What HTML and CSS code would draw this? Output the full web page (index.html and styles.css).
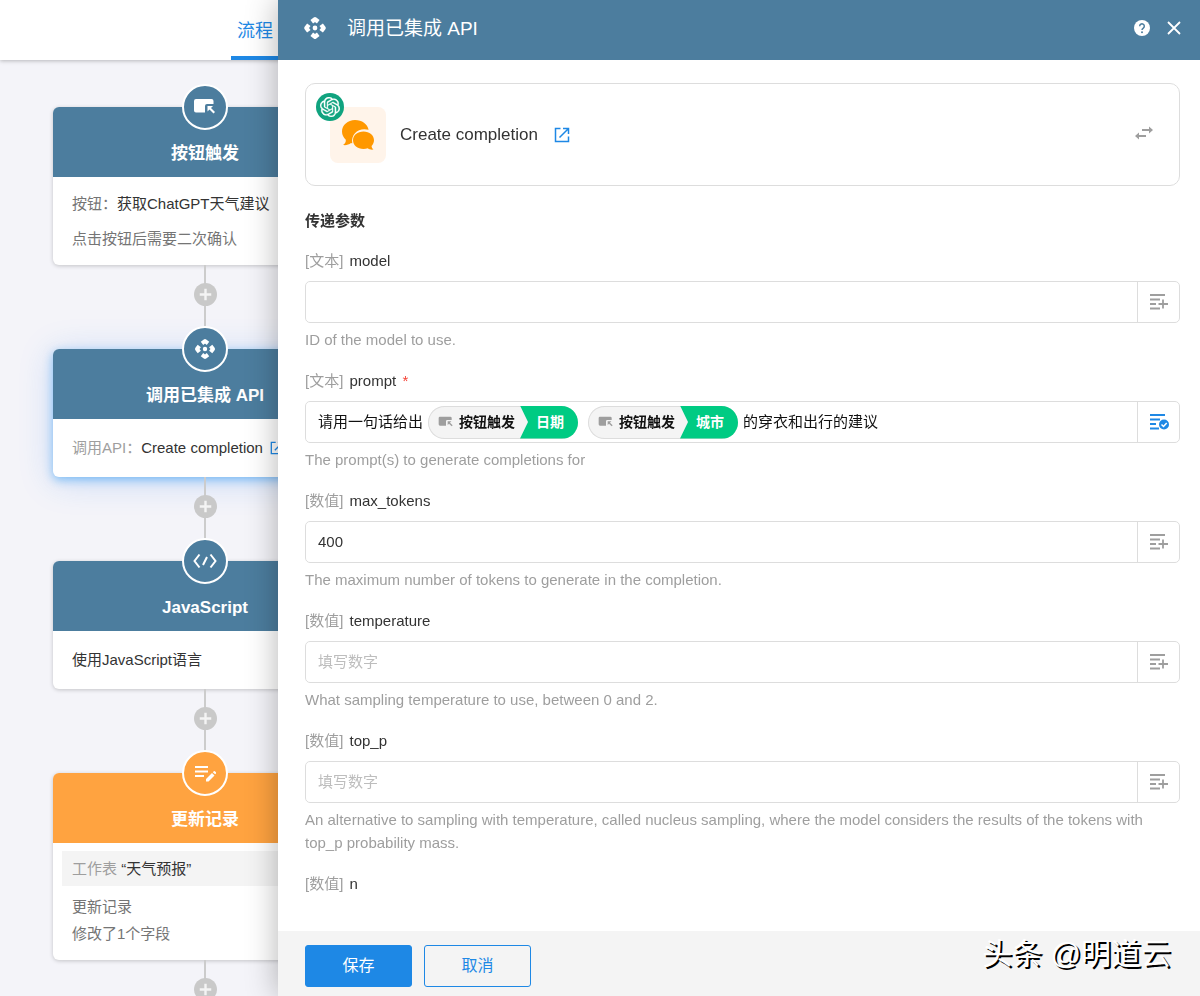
FILE: index.html
```html
<!DOCTYPE html>
<html lang="zh-CN">
<head>
<meta charset="utf-8">
<title>调用已集成 API</title>
<link rel="stylesheet" href="styles.css">
</head>
<body>
<svg class="defs" aria-hidden="true">
  <symbol id="i-api" viewBox="0 0 24 24"><path fill="none" stroke="currentColor" stroke-width="4" stroke-linejoin="round" d="M9 6.300l3-2.300 3 2.300M9 17.700l3 2.300 3-2.300M6.300 9l-2.300 3 2.300 3M17.700 9l2.300 3-2.300 3"/><circle cx="12" cy="12" r="2.200" fill="currentColor"/></symbol>
  <symbol id="i-click" viewBox="0 0 24 24"><path fill="currentColor" d="M3 4h15.500a2 2 0 0 1 2 2v3H14a2 2 0 0 0-2 2v6.500H3a2 2 0 0 1-2-2V6a2 2 0 0 1 2-2z"/><path fill="currentColor" d="M14.500 11H20l-2 2 4 4-1.500 1.500-4-4-2 2z"/></symbol>
  <symbol id="i-open" viewBox="0 0 16 16"><path fill="none" stroke="currentColor" stroke-width="1.500" d="M6.500 1.500h-5v13h13v-5M9 1.500h5.500V7M14 2L5.500 10.500"/></symbol>
  <symbol id="i-plus" viewBox="0 0 24 24"><path fill="none" stroke="currentColor" stroke-width="2.500" d="M12 6v12M6 12h12"/></symbol>
  <symbol id="i-add-list" viewBox="0 0 20 18"><path fill="none" stroke="currentColor" stroke-width="1.800" d="M1 2h15M1 6.500h10M1 11h6M1 15.500h10M14 6.500v9M9.500 11h9.500"/></symbol>
</svg>

<main class="workspace">
  <nav class="topbar"><a class="tab" href="#flow">流程</a></nav>
  <div class="flow">
    <section class="node">
      <header class="node-head"><span class="badge"><svg class="i24"><use href="#i-click"/></svg></span><h2>按钮触发</h2></header>
      <div class="node-body"><p>按钮：<b>获取ChatGPT天气建议</b></p><p>点击按钮后需要二次确认</p></div>
    </section>
    <div class="link"><button class="add" aria-label="添加节点"><svg class="i23"><use href="#i-plus"/></svg></button></div>
    <section class="node selected">
      <header class="node-head"><span class="badge"><svg class="i24"><use href="#i-api"/></svg></span><h2>调用已集成 API</h2></header>
      <div class="node-body single"><p><span class="light">调用API：</span><b>Create completion</b> <a class="open small" href="#api" aria-label="打开"><svg class="i14"><use href="#i-open"/></svg></a></p></div>
    </section>
    <div class="link"><button class="add" aria-label="添加节点"><svg class="i23"><use href="#i-plus"/></svg></button></div>
    <section class="node">
      <header class="node-head"><span class="badge"><svg class="i24" viewBox="0 0 24 24"><path fill="none" stroke="currentColor" stroke-width="2" d="M6.500 5.500L1.500 12l5 6.500M17.500 5.500l5 6.500-5 6.500M14 8l-4 8"/></svg></span><h2>JavaScript</h2></header>
      <div class="node-body single"><p><b>使用JavaScript语言</b></p></div>
    </section>
    <div class="link"><button class="add" aria-label="添加节点"><svg class="i23"><use href="#i-plus"/></svg></button></div>
    <section class="node update">
      <header class="node-head"><span class="badge"><svg class="i22" viewBox="0 0 22 22"><path fill="none" stroke="currentColor" stroke-width="2" d="M1 5h13M1 9.500h13M1 14h9"/><path fill="currentColor" d="M12 17l6-6 2.500 2.500-6 6H12zM18.800 10.200l1-1a.8.8 0 0 1 1.100 0l1.100 1.100a.8.8 0 0 1 0 1.100l-.9.9z"/></svg></span><h2>更新记录</h2></header>
      <div class="node-body compact"><p class="sheet"><span class="light">工作表</span> <b>“天气预报”</b></p><p>更新记录</p><p>修改了1个字段</p></div>
    </section>
    <div class="link"><button class="add" aria-label="添加节点"><svg class="i23"><use href="#i-plus"/></svg></button></div>
  </div>
</main>

<aside class="drawer">
  <header class="drawer-head">
    <svg class="i26"><use href="#i-api"/></svg>
    <h1>调用已集成 API</h1>
    <button class="icon-btn" aria-label="帮助"><svg class="i16" viewBox="0 0 16 16"><circle cx="8" cy="8" r="8" fill="currentColor"/><path class="knock" d="M5.700 6.200a2.300 2.300 0 1 1 3.600 1.900C8.400 8.700 8 9 8 10"/><circle class="knock-dot" cx="8" cy="12.200" r="1"/></svg></button>
    <button class="icon-btn" aria-label="关闭"><svg class="i16" viewBox="0 0 16 16"><path fill="none" stroke="currentColor" stroke-width="1.800" d="M2 2l12 12M14 2L2 14"/></svg></button>
  </header>

  <form class="drawer-body">
    <section class="api">
      <span class="api-icon">
        <svg class="i34" viewBox="0 0 34 34"><path fill="currentColor" d="M14 2C6.800 2 1 7.200 1 13.500c0 3.400 1.500 6 3.800 8.200.3 2.200-.9 4-2.800 5.300 3 .5 5.800-.3 8-2 .4.100.8.200 1.300.2-1.400-8 4.600-14 12-14 1.500 0 3 .2 4.300.6C26.500 6 21 2 14 2z"/><path fill="currentColor" d="M22.500 13.500c-6 0-10.500 3.900-10.500 8.800s4.500 8.700 10.500 8.700c1.500 0 3-.3 4.300-.8 1.700 1.300 3.600 1.700 5.700 1.300-1.200-1-1.900-2.200-1.900-3.600 1.500-1.500 2.400-3.500 2.400-5.600 0-4.900-4.500-8.800-10.500-8.800z"/></svg>
        <span class="brand"><svg class="i20" viewBox="0 0 24 24"><path fill="currentColor" stroke="currentColor" stroke-width=".3" d="M22.2819 9.8211a5.9847 5.9847 0 0 0-.5157-4.9108 6.0462 6.0462 0 0 0-6.5098-2.9A6.0651 6.0651 0 0 0 4.9807 4.1818a5.9847 5.9847 0 0 0-3.9977 2.9 6.0462 6.0462 0 0 0 .7427 7.0966 5.98 5.98 0 0 0 .511 4.9107 6.051 6.051 0 0 0 6.5146 2.9001A5.9847 5.9847 0 0 0 13.2599 24a6.0557 6.0557 0 0 0 5.7718-4.2058 5.9894 5.9894 0 0 0 3.9977-2.9001 6.0557 6.0557 0 0 0-.7475-7.0729zm-9.022 12.6081a4.4755 4.4755 0 0 1-2.8764-1.0408l.1419-.0804 4.7783-2.7582a.7948.7948 0 0 0 .3927-.6813v-6.7369l2.02 1.1686a.071.071 0 0 1 .038.052v5.5826a4.504 4.504 0 0 1-4.4945 4.4944zm-9.6607-4.1254a4.4708 4.4708 0 0 1-.5346-3.0137l.142.0852 4.783 2.7582a.7712.7712 0 0 0 .7806 0l5.8428-3.3685v2.3324a.0804.0804 0 0 1-.0332.0615L9.74 19.9502a4.4992 4.4992 0 0 1-6.1408-1.6464zM2.3408 7.8956a4.485 4.485 0 0 1 2.3655-1.9728V11.6a.7664.7664 0 0 0 .3879.6765l5.8144 3.3543-2.0201 1.1685a.0757.0757 0 0 1-.071 0l-4.8303-2.7865A4.504 4.504 0 0 1 2.3408 7.872zm16.5963 3.8558L13.1038 8.364 15.1192 7.2a.0757.0757 0 0 1 .071 0l4.8303 2.7913a4.4944 4.4944 0 0 1-.6765 8.1042v-5.6772a.79.79 0 0 0-.407-.667zm2.0107-3.0231l-.142-.0852-4.7735-2.7818a.7759.7759 0 0 0-.7854 0L9.409 9.2297V6.8974a.0662.0662 0 0 1 .0284-.0615l4.8303-2.7866a4.4992 4.4992 0 0 1 6.6802 4.66zM8.3065 12.863l-2.02-1.1638a.0804.0804 0 0 1-.038-.0567V6.0742a4.4992 4.4992 0 0 1 7.3757-3.4537l-.142.0805L8.704 5.459a.7948.7948 0 0 0-.3927.6813zm1.0976-2.3654l2.602-1.4998 2.6069 1.4998v2.9994l-2.5974 1.4997-2.6067-1.4997Z"/></svg></span>
      </span>
      <span class="api-name">Create completion</span>
      <a class="open" href="#api" aria-label="打开"><svg class="i16"><use href="#i-open"/></svg></a>
      <button type="button" class="swap" aria-label="切换"><svg class="i18" viewBox="0 0 18 18"><path fill="none" stroke="currentColor" stroke-width="1.800" d="M7 4h8M11 10H3"/><path fill="currentColor" d="M14 .5L18 4l-4 3.500zM4 6.500L0 10l4 3.500z"/></svg></button>
    </section>

    <h3 class="section-title">传递参数</h3>

    <div class="field">
      <label for="f-model"><span>[文本]</span> model</label>
      <div class="control"><input id="f-model" type="text"><button type="button" class="pick" aria-label="选择字段"><svg class="list"><use href="#i-add-list"/></svg></button></div>
      <p class="hint">ID of the model to use.</p>
    </div>

    <div class="field">
      <label id="l-prompt"><span>[文本]</span> prompt <i>*</i></label>
      <div class="control">
        <div class="rich" role="textbox" aria-labelledby="l-prompt" contenteditable="true" spellcheck="false"><span>请用一句话给出</span><span class="chip"><span class="source"><svg class="i16"><use href="#i-click"/></svg>按钮触发</span><span class="value">日期</span></span><span class="chip"><span class="source"><svg class="i16"><use href="#i-click"/></svg>按钮触发</span><span class="value">城市</span></span><span>的穿衣和出行的建议</span></div>
        <button type="button" class="pick active" aria-label="选择字段"><svg class="list" viewBox="0 0 20 18"><path fill="none" stroke="currentColor" stroke-width="1.800" d="M1 2h15M1 6.500h10M1 11h6M1 15.500h9"/><circle cx="15" cy="11.500" r="5" fill="currentColor"/><path fill="none" stroke="#fff" stroke-width="1.500" d="M12.500 11.500l2 2 3.200-3.500"/></svg></button>
      </div>
      <p class="hint">The prompt(s) to generate completions for</p>
    </div>

    <div class="field">
      <label for="f-max"><span>[数值]</span> max_tokens</label>
      <div class="control"><input id="f-max" type="text" value="400"><button type="button" class="pick" aria-label="选择字段"><svg class="list"><use href="#i-add-list"/></svg></button></div>
      <p class="hint">The maximum number of tokens to generate in the completion.</p>
    </div>

    <div class="field">
      <label for="f-temp"><span>[数值]</span> temperature</label>
      <div class="control"><input id="f-temp" type="text" placeholder="填写数字"><button type="button" class="pick" aria-label="选择字段"><svg class="list"><use href="#i-add-list"/></svg></button></div>
      <p class="hint">What sampling temperature to use, between 0 and 2.</p>
    </div>

    <div class="field">
      <label for="f-top"><span>[数值]</span> top_p</label>
      <div class="control"><input id="f-top" type="text" placeholder="填写数字"><button type="button" class="pick" aria-label="选择字段"><svg class="list"><use href="#i-add-list"/></svg></button></div>
      <p class="hint">An alternative to sampling with temperature, called nucleus sampling, where the model considers the results of the tokens with top_p probability mass.</p>
    </div>

    <div class="field">
      <label><span>[数值]</span> n</label>
    </div>
  </form>

  <footer class="drawer-foot">
    <button class="btn primary">保存</button>
    <button class="btn">取消</button>
    <span class="watermark">头条 @明道云</span>
  </footer>
</aside>
</body>
</html>
```
FILE: styles.css
```css
* { box-sizing: border-box; }
html, body { height: 100%; }
body {
  margin: 0;
  overflow: hidden;
  background: #f4f4f9;
  color: #333;
  font: 15px/22px "Liberation Sans", "Noto Sans CJK SC", sans-serif;
}
h1, h2, h3, p { margin: 0; }
button, input { font: inherit; color: inherit; }
button { padding: 0; border: 0; background: none; cursor: pointer; }
svg { display: block; flex: none; }
.defs { position: absolute; width: 0; height: 0; }
.i14 { width: 14px; height: 14px; }
.i16 { width: 16px; height: 16px; }
.i18 { width: 18px; height: 18px; }
.i20 { width: 20px; height: 20px; }
.i22 { width: 22px; height: 22px; }
.i23 { width: 23px; height: 23px; }
.i24 { width: 24px; height: 24px; }
.i26 { width: 26px; height: 26px; }
.i34 { width: 34px; height: 34px; }

/* Workflow canvas */
.workspace { height: 100%; overflow: hidden; }
.topbar {
  display: flex;
  height: 60px;
  padding-left: 231px;
  background: #fff;
  box-shadow: 0 1px 4px rgba(0, 0, 0, .25);
}
.tab {
  padding: 0 6px;
  border-bottom: 4px solid #1e88e5;
  color: #1e88e5;
  font-size: 18px;
  line-height: 62px;
  text-decoration: none;
}
.flow { width: 304px; margin: 47px 0 0 53px; }
.node { border-radius: 6px; background: #fff; box-shadow: 0 1px 4px rgba(0, 0, 0, .2); }
.node.selected { box-shadow: 0 3px 10px rgba(33, 150, 243, .5), 0 4px 34px rgba(33, 120, 243, .22); }
.node-head {
  position: relative;
  height: 70px;
  padding-top: 34px;
  border-radius: 6px 6px 0 0;
  background: #4c7d9e;
  color: #fff;
  text-align: center;
}
.update .node-head { background: #ffa340; }
.node-head h2 { font-size: 17px; line-height: 26px; font-weight: 600; }
.badge {
  position: absolute;
  top: -23px;
  left: calc(50% - 23px);
  display: grid;
  place-items: center;
  width: 46px;
  height: 46px;
  border: 2px solid #fff;
  border-radius: 50%;
  background: inherit;
}
.node-body { padding: 9px 19px; color: #757575; line-height: 35px; white-space: nowrap; }
.node-body.single { padding: 11px 19px 12px; }
.node-body b { color: #333; font-weight: 400; }
.node-body .light { color: #9e9e9e; }
.node-body.compact { padding: 8px 9px 13px; line-height: 27px; }
.compact p { padding: 0 10px; }
.compact .sheet { margin-bottom: 7px; background: #f4f4f4; line-height: 35px; }
.open { color: #1e88e5; }
.small { display: inline-block; margin-left: 3px; vertical-align: middle; }
.small svg { margin-bottom: 3px; }
.link {
  display: flex;
  justify-content: center;
  height: 84px;
  padding-top: 18px;
  background: linear-gradient(#ccc, #ccc) center / 2px 100% no-repeat;
}
.add { width: 23px; height: 23px; border-radius: 50%; background: #c9c9c9; color: #f4f4f4; }

/* Drawer over the canvas */
.drawer {
  position: fixed;
  inset: 0 0 0 278px;
  display: flex;
  flex-direction: column;
  background: #fff;
  box-shadow: 0 0 30px rgba(0, 0, 0, .3);
}
.drawer-head {
  display: flex;
  flex: none;
  align-items: center;
  gap: 16px;
  height: 60px;
  padding: 0 18px 4px 24px;
  background: #4c7d9e;
  color: #fff;
}
.drawer-head h1 { flex: 1; padding: 2px 0 0 3px; font-size: 19px; font-weight: 400; line-height: 28px; }
.knock { fill: none; stroke: #4c7d9e; stroke-width: 1.5px; }
.knock-dot { fill: #4c7d9e; }
.drawer-body { flex: 1; min-height: 0; overflow: hidden; padding: 23px 20px 0 27px; }
.api {
  display: flex;
  align-items: center;
  height: 103px;
  padding: 0 26px 0 24px;
  border: 1px solid #ddd;
  border-radius: 10px;
}
.api-icon {
  position: relative;
  display: grid;
  place-items: center;
  width: 56px;
  height: 56px;
  border-radius: 8px;
  background: #fff4ea;
  color: #ff9800;
}
.brand {
  position: absolute;
  top: -14px;
  left: -14px;
  display: grid;
  place-items: center;
  width: 28px;
  height: 28px;
  border-radius: 50%;
  background: #10a37f;
  color: #fff;
}
.api-name { margin: 0 16px 0 14px; font-size: 17px; line-height: 24px; }
.swap { margin-left: auto; color: #9e9e9e; }
.section-title { margin: 24px 0 18px; font-size: 15px; line-height: 22px; font-weight: 700; }
.field { margin-bottom: 19px; }
.field label { display: block; margin-bottom: 9px; }
.field label span { margin-right: 2px; color: #9e9e9e; }
.field label i { margin-left: 2px; color: #f44336; font-style: normal; }
.control { display: flex; height: 42px; border: 1px solid #ddd; border-radius: 5px; }
.control input, .rich { flex: 1; min-width: 0; padding: 0 12px; border: 0; outline: 0; background: none; }
.control input::placeholder { color: #bdbdbd; opacity: 1; }
.rich { display: flex; align-items: center; color: #111; white-space: nowrap; }
.pick { display: grid; place-items: center; width: 42px; border-left: 1px solid #ddd; color: #9e9e9e; }
.pick.active { color: #1e88e5; }
.list { width: 20px; height: 18px; }
.hint { margin-top: 5px; color: #9e9e9e; line-height: 23px; }
.chip {
  display: flex;
  height: 33px;
  margin: 0 5px;
  border-radius: 17px;
  overflow: hidden;
  background: #f4f4f4;
  box-shadow: inset 0 0 0 1px #ddd;
  font-size: 14px;
  font-weight: 600;
  line-height: 33px;
}
.source { display: flex; align-items: center; gap: 5px; padding-left: 10px; }
.source svg { color: #9e9e9e; }
.value {
  margin-left: 5px;
  padding: 0 14px 0 16px;
  background: #00cb83;
  color: #fff;
  clip-path: polygon(0 0, 100% 0, 100% 100%, 0 100%, 8px 50%);
}
.drawer-foot {
  display: flex;
  flex: none;
  align-items: center;
  gap: 12px;
  height: 65px;
  padding: 5px 27px 0 27px;
  background: #f4f4f4;
}
.btn {
  width: 107px;
  height: 42px;
  border: 1px solid #1e88e5;
  border-radius: 3px;
  color: #1e88e5;
  font-size: 16px;
}
.btn.primary { background: #1e88e5; color: #fff; }
.watermark {
  margin: 0 2px 24px auto;
  color: #fff;
  font-size: 30px;
  line-height: 36px;
  text-shadow: 2px 2px 0 #000;
}
```
